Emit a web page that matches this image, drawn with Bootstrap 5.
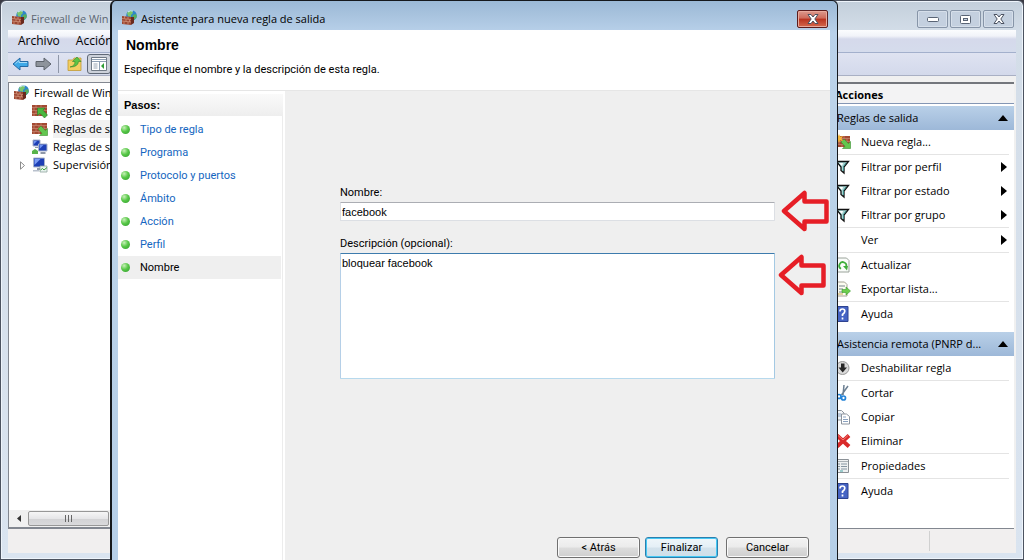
<!DOCTYPE html>
<html lang="es">
<head>
<meta charset="utf-8">
<meta name="viewport" content="width=device-width, initial-scale=1">
<title>Asistente para nueva regla de salida</title>
<link href="https://cdn.jsdelivr.net/npm/bootstrap@5.3.0/dist/css/bootstrap.min.css" rel="stylesheet">
<style>
:root { --ui: "Open Sans", "Noto Sans", sans-serif; --dlg: "Liberation Sans", Arial, sans-serif; }
body { font-family: var(--ui); font-size: 11px; line-height: 18px; color: #000; background: #3a3a44; }
svg { display: block; flex: none; }
.i16 { width: 16px; height: 16px; }
.win-back { border: 1px solid #4c5360; border-radius: 6px 6px 0 0; padding: 0 7px 6px; box-shadow: inset 0 0 0 1px #eef4fb;
  background: linear-gradient(#c3cfdb, #d3dde8 30px, #dae4f0); }
.titlebar { height: 29px; padding: 9px 2px 0 3px; }
.win-back .titlebar { color: #5c6672; }
.caption-btn { width: 31px; height: 18px; padding: 0; border: 1px solid #8795a8; border-radius: 2px; background: #c4d0df;
  display: flex; align-items: center; justify-content: center; box-shadow: inset 0 0 0 1px #d6dfea; }
.caption-close { border-color: #5c1c1c; background: linear-gradient(#dc9a8e, #cf6a5a 45%, #b8321f 50%, #d4694e); box-shadow: inset 0 0 0 1px #e8a99c; }
.menu-row { height: 23px; padding: 0 10px; gap: 16px; font-size: 12px; border-bottom: 1px solid #a3b0cc; background: linear-gradient(#fbfcfe, #f1f3f9 6px, #d5d9eb 9px, #d5dcec); }
.menu-row button { border: 0; padding: 0; background: none; }
.tool-row { height: 23px; padding: 0 4px; border-bottom: 1px solid #a9b0c4; background: linear-gradient(#dfe3f1, #d3d9eb); }
.tool-row button { border: 0; padding: 0; background: none; }
.tool-row .pressed { border: 1px solid #5f6876; border-radius: 3px; background: #ccd1da; width: 24px; height: 20px; padding: 0 3px; margin-left: 4px; }
.tool-sep { width: 1px; height: 18px; background: #8f97a8; margin: 0 8px 0 6px; }
.panes { background: #f0f0f0; padding: 6px 2px 0 0; }
.tree-pane { width: 190px; background: #fff; border: 1px solid #828790; border-bottom-width: 2px; }
.tree-pane ul { padding-top: 1px; }
.tree-pane li { height: 18px; gap: 5px; padding-left: 23px; }
.tree-pane li.root { padding-left: 4px; }
.tree-pane li.picked span { background: #f1f1f1; flex: 1; }
.tree-pane li.expandable { padding-left: 9px; gap: 5px; }
.h-scroll { height: 17px; background: #f0f0f0; }
.h-scroll i { width: 19px; display: flex; justify-content: center; }
.h-thumb { width: 81px; height: 15px; border: 1px solid #979797; border-radius: 2px; background: linear-gradient(#f6f6f6, #e6e6e8 50%, #d2d2d4 52%, #dadadc); }
.middle-pane { background: #fff; }
.actions-pane { width: 181px; border-top: 2px solid #73767c; border-bottom: 1px solid #828790; background: #fff; }
.actions-title { height: 20px; padding-left: 2px; font-weight: 700; background: #f3f3f4; border-bottom: 1px solid #8496b4; margin-bottom: 2px; line-height: 21px; }
.group-head { height: 24px; padding: 0 6px 0 4px; background: linear-gradient(#b9d0e8, #9db8d8); }
.group-head:nth-of-type(n+3) { margin-top: 6px; }
.act { height: 24px; padding: 0 7px 0 2px; gap: 10px; border: 0; background: none; width: 100%; text-align: left; }
.act .slot { width: 16px; }
.actions-pane hr { margin: 0 5px 0 4px; height: 1px; border: 0; background: #e4e4e4; opacity: 1; }
.status { height: 24px; background: #f1efef; }
.status div:last-child { width: 87px; border-left: 1px solid #d0d0d0; margin: 2px 0; }

.dialog { position: absolute; top: 0; left: 110px; right: 186px; bottom: 0; border: solid #15181c; border-width: 1px 1px 0 2px; border-radius: 6px 6px 0 0;
  padding: 0 7px 0 6px; background: linear-gradient(#9bb9d6, #a8c3de 14px, #b9d1ea 32px, #bcd3e9 100px, #b6cfe8); overflow: hidden; }
.dlg-body { font-family: Roboto, Arial, sans-serif; font-size: 11px; background: #efefef; }
.dlg-head { height: 61px; background: #fff; border-bottom: 1px solid #e6e6e6; padding: 6px 6px 0; }
.dlg-head h1 { font: 700 14px/18px var(--dlg); margin: 0 0 7px 2px; }
.dlg-head p { margin: 0; }
.steps { width: 167px; background: #fff; border-top: 3px solid #fff; border-right: 2px solid #fff; box-shadow: inset -1px 0 #ececec; }
.steps h2 { font: 700 11px/22px var(--dlg); padding-left: 6px; margin: 0 0 2px; background: linear-gradient(#fafafa, #eee); }
.steps li { height: 23px; padding-left: 3px; gap: 10px; margin-right: 2px; }
.steps a { color: #1466c0; text-decoration: none; }
.steps li.now { background: #efefef; }
.steps li.now a { color: #000; }
.orb { width: 9px; height: 9px; border-radius: 50%; background: radial-gradient(circle at 35% 30%, #c8f0b8, #58c848 45%, #2f9a2c); }
.fields { padding: 93px 55px 0; }
.fields label { line-height: 18px; display: block; }
.fields input, .fields textarea { display: block; width: 100%; font-family: var(--dlg); border: 1px solid #dcdfe4; border-top-color: #abadb3; border-radius: 1px; padding: 0 1px; background: #fff; color: #000; line-height: 18px; outline: 0; resize: none; }
.fields input { height: 19px; }
.fields textarea { height: 126px; border-color: #3d7bad #a4c9e3 #b7d9ed #b5cfe7; }
.field { position: relative; }
.name-field { margin-bottom: 14px; }
.field svg { position: absolute; left: 100%; margin-left: 3px; }
.name-field svg { margin-left: 6px; }
.dlg-foot { padding: 0 21px 2px 0; }
.dlg-foot button { width: 83px; height: 21px; border: 1px solid #707070; border-radius: 3px; padding: 0; line-height: 18px; background: linear-gradient(#f3f3f3, #ebebeb 49%, #dddddd 51%, #cfcfcf); box-shadow: inset 0 0 0 1px #fafafa; }
.dlg-foot .main-btn { width: 73px; border-color: #2b7fae; background: linear-gradient(#eff6fa, #e4eff6 49%, #d3e2ec 51%, #cfdfe9); box-shadow: inset 0 0 0 1px #45c8f4; margin: 0 8px 0 5px; }
</style>
</head>
<body>
<svg width="0" height="0" class="position-absolute" aria-hidden="true">
  <defs>
    <symbol id="firewall" viewBox="0 0 16 16">
      <circle cx="10.500" cy="5.500" r="5.300" fill="#2f86c9"/><path d="M6 3Q8 0 11 1l1 2-2 2 0 2-3-1z" fill="#7ac66a"/><path d="M12 5l3-1 1 3-3 3-2-2z" fill="#58b060"/><path d="M7 2q2-2 5-1" stroke="#d6f1fb" fill="none"/>
      <path d="M1 6l9 1v8l-9-1z" fill="#9c4631"/><path d="M10 7l3 0v6l-3 2z" fill="#6a2a1d"/>
      <path d="M1 8.500l9 1M1 11l9 1M3.500 6v2.500M7 6.500v2.500M5 9v2.500M8.500 9.500V12M3 11.500V14M7 12v2.500" stroke="#d79b82" stroke-width=".7"/>
    </symbol>
    <symbol id="bricks" viewBox="0 0 16 16">
      <path d="M0 2h15v11H0z" fill="#a34a33"/><path d="M0 4.500h15M0 7.500h15M0 10.500h15M4 2v2.500M9 2v2.500M2 4.500v3M7 4.500v3M12 4.500v3M4 7.500v3M9 7.500v3M2 10.500V13M7 10.500V13" stroke="#c98a72" stroke-width=".7"/>
    </symbol>
    <symbol id="rulein" viewBox="0 0 16 16"><use href="#bricks"/><path d="M5.500 5h7.500l-2 2.200L15.500 12l-3 3L8 10.300 5.500 12.500z" fill="#49b83f" stroke="#2a7c26" stroke-width=".6"/></symbol>
    <symbol id="ruleout" viewBox="0 0 16 16"><use href="#bricks"/><path d="M15.500 14.500H7.500l2.500-2.200L6 8l3-3 4.300 4.500 2.200-2z" fill="#63c64f" stroke="#3a9030" stroke-width=".6"/></symbol>
    <symbol id="newrule" viewBox="0 0 16 16"><use href="#bricks"/><path d="M15.500 14.500H7.500l2.500-2.200L6 8l3-3 4.300 4.500 2.200-2z" fill="#63c64f" stroke="#3a9030" stroke-width=".6"/><path d="M4 0l1.200 2.800L8 2 6.500 4.500 8 7 5 6.300 4 9 3 6.300 0 7l1.500-2.500L0 2l2.800.8z" fill="#f5b83b"/></symbol>
    <symbol id="pcs" viewBox="0 0 16 16">
      <path d="M1 1h7v6H1z" fill="#1d3fb5" stroke="#a9b4cb"/><path d="M6.500 5h8.500v7H6.500z" fill="#1d3fb5" stroke="#a9b4cb"/><path d="M2 2h3L2 5zM7.500 6h4l-4 4z" fill="#6f93f0"/><path d="M3 8h3v1H3zM8.500 13h5v2h-5z" fill="#8f98a8"/><path d="M0 15v-3l3-2 3 2v3z" fill="#59b44a"/>
    </symbol>
    <symbol id="monitor" viewBox="0 0 16 16">
      <path d="M1.500 1h11v9h-11z" fill="#1d3fb5" stroke="#a9b4cb"/><path d="M2.500 2h6l-6 6z" fill="#7c9cf3"/><path d="M5 11h5v2H5z" fill="#8f98a8"/><path d="M8 9h7v6H8z" fill="#e8f3ef" stroke="#8fa3a0" stroke-width=".8"/><path d="M8.500 13l2-1.500 1.500 1.500 3-2.500" stroke="#3aa23a" fill="none"/><path d="M1 13h6v1.500H1z" fill="#b9c1cd"/>
    </symbol>
    <symbol id="funnel" viewBox="0 0 16 16"><path d="M1.500 2.500h12L9 8v6l-3-2.500V8z" fill="#a7d5d3" stroke="#111" stroke-width="1.300"/><path d="M4 4h4L7 7z" fill="#fff"/><path d="M11 4L8.500 7.500V12" stroke="#3c8c8a" fill="none"/></symbol>
    <symbol id="refresh" viewBox="0 0 16 16"><path d="M2.500 1h9l2.500 2.500V15H2.500z" fill="#fafcfa" stroke="#9aa39a"/><path d="M6 11.700A3.500 3.500 0 1 1 11 10" stroke="#3fae3b" stroke-width="1.800" fill="none"/><path d="M8 9h5l-1 4.500z" fill="#3fae3b"/></symbol>
    <symbol id="export" viewBox="0 0 16 16"><path d="M2.500 1h7l2.500 2.500V15H2.500z" fill="#fdfcf1" stroke="#a5a293"/><path d="M4 5h6M4 8h4M4 11h4" stroke="#77848c"/><path d="M3 13h5" stroke="#c9a850"/><path d="M7 8.500h4V6l4.500 4L11 14v-2.500H7z" fill="#6cce4d" stroke="#3a9a2e" stroke-width=".6"/></symbol>
    <symbol id="disable" viewBox="0 0 16 16"><circle cx="7.500" cy="8" r="6.500" fill="#dadada" stroke="#999"/><path d="M6 3.500h3.500v4H12L7.700 12.500 3.500 7.500H6z" fill="#262626"/></symbol>
    <symbol id="cut" viewBox="0 0 16 16"><path d="M13 1L6.500 10M9 0L8 10" stroke="#6c7f92" stroke-width="1.500"/><circle cx="4" cy="11.500" r="2" fill="none" stroke="#2584d8" stroke-width="1.700"/><circle cx="8.500" cy="13" r="2" fill="none" stroke="#2584d8" stroke-width="1.700"/></symbol>
    <symbol id="copy" viewBox="0 0 16 16"><path d="M1.500 1.500h5l2.500 2.500v7H1.500z" fill="#f4f6f8" stroke="#8c949e"/><path d="M6.500 5h5l3 2.500V15h-8z" fill="#fff" stroke="#8c949e"/><path d="M3 5h3M3 7h3M8 8h3M8 10.500h5M8 12.500h5" stroke="#8aa2c0"/></symbol>
    <symbol id="delete" viewBox="0 0 16 16"><path d="M2 2.500l12 11M14 2.500l-12 11" stroke="#d92a2a" stroke-width="4"/><path d="M3 2.500l5 4.500 5-4.500" stroke="#f27a72" fill="none"/></symbol>
    <symbol id="props" viewBox="0 0 16 16"><path d="M.5 1.500h13v13H.5z" fill="#eef0f1" stroke="#8b9196"/><path d="M1 3.500h12" stroke="#a9b0b5"/><path d="M3 6h2M6 6h6M3 8.500h2M6 8.500h6M3 11h2M6 11h6" stroke="#8696a2"/><path d="M5 13h3" stroke="#46a5a5"/></symbol>
    <symbol id="help" viewBox="0 0 16 16"><path d="M1.500 .5H13v15H1.500z" fill="#4664c4" stroke="#2e4390"/><path d="M5 5.500Q5 3 7.400 3T9.800 5.300Q9.800 6.800 7.500 8.500V10M7.500 11.500v2" stroke="#fff" stroke-width="1.700" fill="none"/></symbol>
    <symbol id="back" viewBox="0 0 18 16"><path d="M1 8l7-6v3.500h8v5H8V14z" fill="#3fa9e8" stroke="#2569a4"/><path d="M3.500 7.500L7 4.500v2h8" stroke="#a8dcf8" fill="none"/></symbol>
    <symbol id="folderup" viewBox="0 0 16 16"><path d="M1 4h5l1-2h7v12.500H1z" fill="#f2cf62" stroke="#c39a33" stroke-width=".8"/><path d="M3 11Q8 10 8 5.500H5.500L10 1l4 4.500h-2.500Q11 11 3 11z" fill="#5cc446" stroke="#31862a" stroke-width=".6"/></symbol>
    <symbol id="panel" viewBox="0 0 16 16"><path d="M.5 1.500h15v13H.5z" fill="#fff" stroke="#707a86"/><path d="M1 3.500h14M1 5.500h14" stroke="#8fa0b4"/><path d="M8.500 6v8" stroke="#8fa0b4"/><path d="M2.500 8h4M2.500 10h4M2.500 12h4" stroke="#9aa6b4"/><path d="M13 7v6l-3-3z" fill="#2f9d35"/></symbol>
    <symbol id="arrow" viewBox="0 0 48 42"><path d="M3 21L23.500 3v8.500H45.500v20h-22V39z" fill="none" stroke="#e61e26" stroke-width="4.500" stroke-linejoin="round"/></symbol>
    <symbol id="xmark" viewBox="0 0 12 10"><path d="M1 .5h3L6 3 8 .5h3L7.800 5 11 9.500H8L6 7 4 9.500H1L4.200 5z" fill="#fff" stroke="#4b5261"/></symbol>
    <symbol id="tri" viewBox="0 0 6 10"><path d="M0 0l6 5-6 5z"/></symbol>
    <symbol id="up" viewBox="0 0 10 6"><path d="M0 6l5-6 5 6z"/></symbol>
  </defs>
</svg>

<div class="position-relative vh-100 overflow-hidden">
  <div class="win-back h-100 d-flex flex-column">
    <header class="titlebar d-flex align-items-start">
      <svg class="i16 me-1"><use href="#firewall"/></svg><span class="text-nowrap">Firewall de Win</span>
      <div class="ms-auto d-flex" style="gap:2px">
        <button class="caption-btn" aria-label="Minimizar"><svg width="12" height="5"><rect x=".5" y=".5" width="11" height="4" rx="1" fill="#fff" stroke="#596475"/></svg></button>
        <button class="caption-btn" aria-label="Maximizar"><svg width="11" height="9"><rect x=".5" y=".5" width="10" height="8" rx="1" fill="#fff" stroke="#596475"/><rect x="3.500" y="3.500" width="4" height="2" fill="#c4d0df" stroke="#596475"/></svg></button>
        <button class="caption-btn" aria-label="Cerrar ventana"><svg width="12" height="10"><use href="#xmark"/></svg></button>
      </div>
    </header>
    <nav class="menu-row d-flex align-items-center"><button>Archivo</button><button>Acción</button></nav>
    <div class="tool-row d-flex align-items-center">
      <button aria-label="Atrás"><svg width="18" height="16"><use href="#back"/></svg></button>
      <button class="ms-1" aria-label="Adelante"><svg width="18" height="16"><path d="M17 8l-7-6v3.500H2v5h8V14z" fill="#8d939b" stroke="#5e646d"/></svg></button>
      <span class="tool-sep"></span>
      <button aria-label="Subir"><svg class="i16"><use href="#folderup"/></svg></button>
      <button class="pressed" aria-label="Panel"><svg class="i16"><use href="#panel"/></svg></button>
    </div>
    <main class="panes flex-grow-1 d-flex">
      <div class="tree-pane d-flex flex-column">
        <ul class="list-unstyled mb-0 flex-grow-1">
          <li class="root d-flex align-items-center"><svg class="i16"><use href="#firewall"/></svg><span>Firewall de Win</span></li>
          <li class="d-flex align-items-center"><svg class="i16"><use href="#rulein"/></svg><span>Reglas de e</span></li>
          <li class="picked d-flex align-items-center"><svg class="i16"><use href="#ruleout"/></svg><span>Reglas de s</span></li>
          <li class="d-flex align-items-center"><svg class="i16"><use href="#pcs"/></svg><span>Reglas de s</span></li>
          <li class="expandable d-flex align-items-center"><svg width="9" height="9"><path d="M2.500 .8v7.400l4-3.700z" fill="#fff" stroke="#8c8c8c"/></svg><svg class="i16"><use href="#monitor"/></svg><span>Supervisión</span></li>
        </ul>
        <div class="h-scroll d-flex align-items-center"><i><svg width="4" height="7"><path d="M4 0v7L0 3.500z" fill="#333"/></svg></i>
          <div class="h-thumb d-flex align-items-center justify-content-center"><svg width="8" height="7"><path d="M.5 0v7M3.500 0v7M6.500 0v7" stroke="#666"/></svg></div></div>
      </div>
      <div class="middle-pane flex-grow-1"></div>
      <aside class="actions-pane">
        <div class="actions-title">Acciones</div>
        <div class="group-head d-flex align-items-center justify-content-between"><span>Reglas de salida</span><svg width="10" height="6"><use href="#up"/></svg></div>
        <button class="act d-flex align-items-center"><svg class="i16"><use href="#newrule"/></svg>Nueva regla...</button><hr>
        <button class="act d-flex align-items-center"><svg class="i16"><use href="#funnel"/></svg>Filtrar por perfil<svg class="ms-auto" width="6" height="10"><use href="#tri"/></svg></button>
        <button class="act d-flex align-items-center"><svg class="i16"><use href="#funnel"/></svg>Filtrar por estado<svg class="ms-auto" width="6" height="10"><use href="#tri"/></svg></button>
        <button class="act d-flex align-items-center"><svg class="i16"><use href="#funnel"/></svg>Filtrar por grupo<svg class="ms-auto" width="6" height="10"><use href="#tri"/></svg></button><hr>
        <button class="act d-flex align-items-center"><span class="slot"></span>Ver<svg class="ms-auto" width="6" height="10"><use href="#tri"/></svg></button><hr>
        <button class="act d-flex align-items-center"><svg class="i16"><use href="#refresh"/></svg>Actualizar</button>
        <button class="act d-flex align-items-center"><svg class="i16"><use href="#export"/></svg>Exportar lista...</button><hr>
        <button class="act d-flex align-items-center"><svg class="i16"><use href="#help"/></svg>Ayuda</button>
        <div class="group-head d-flex align-items-center justify-content-between"><span class="text-nowrap">Asistencia remota (PNRP d...</span><svg width="10" height="6"><use href="#up"/></svg></div>
        <button class="act d-flex align-items-center"><svg class="i16"><use href="#disable"/></svg>Deshabilitar regla</button><hr>
        <button class="act d-flex align-items-center"><svg class="i16"><use href="#cut"/></svg>Cortar</button>
        <button class="act d-flex align-items-center"><svg class="i16"><use href="#copy"/></svg>Copiar</button>
        <button class="act d-flex align-items-center"><svg class="i16"><use href="#delete"/></svg>Eliminar</button><hr>
        <button class="act d-flex align-items-center"><svg class="i16"><use href="#props"/></svg>Propiedades</button><hr>
        <button class="act d-flex align-items-center"><svg class="i16"><use href="#help"/></svg>Ayuda</button>
      </aside>
    </main>
    <footer class="status d-flex"><div class="flex-grow-1"></div><div></div></footer>
  </div>

  <section class="dialog d-flex flex-column" role="dialog" aria-label="Asistente">
    <header class="titlebar d-flex align-items-start">
      <svg class="i16 me-1"><use href="#firewall"/></svg><span>Asistente para nueva regla de salida</span>
      <button class="caption-btn caption-close ms-auto" aria-label="Cerrar"><svg width="12" height="10"><use href="#xmark"/></svg></button>
    </header>
    <div class="dlg-body flex-grow-1 d-flex flex-column">
      <div class="dlg-head">
        <h1>Nombre</h1>
        <p>Especifique el nombre y la descripción de esta regla.</p>
      </div>
      <div class="flex-grow-1 d-flex">
        <nav class="steps">
          <h2>Pasos:</h2>
          <ul class="list-unstyled mb-0">
            <li class="d-flex align-items-center"><span class="orb"></span><a href="#">Tipo de regla</a></li>
            <li class="d-flex align-items-center"><span class="orb"></span><a href="#">Programa</a></li>
            <li class="d-flex align-items-center"><span class="orb"></span><a href="#">Protocolo y puertos</a></li>
            <li class="d-flex align-items-center"><span class="orb"></span><a href="#">Ámbito</a></li>
            <li class="d-flex align-items-center"><span class="orb"></span><a href="#">Acción</a></li>
            <li class="d-flex align-items-center"><span class="orb"></span><a href="#">Perfil</a></li>
            <li class="now d-flex align-items-center"><span class="orb"></span><a href="#">Nombre</a></li>
          </ul>
        </nav>
        <form class="flex-grow-1 d-flex flex-column">
          <div class="fields flex-grow-1">
            <label for="nombre">Nombre:</label>
            <div class="field name-field"><input id="nombre" type="text" value="facebook"><svg width="48" height="42" style="top:-12px"><use href="#arrow"/></svg></div>
            <label for="desc">Descripción (opcional):</label>
            <div class="field"><textarea id="desc">bloquear facebook</textarea><svg width="48" height="42" style="top:1px"><use href="#arrow"/></svg></div>
          </div>
          <div class="dlg-foot d-flex justify-content-end">
            <button type="button">&lt; Atrás</button><button type="submit" class="main-btn">Finalizar</button><button type="button">Cancelar</button>
          </div>
        </form>
      </div>
    </div>
  </section>
</div>
<script src="https://cdn.jsdelivr.net/npm/bootstrap@5.3.0/dist/js/bootstrap.bundle.min.js"></script>
</body>
</html>
